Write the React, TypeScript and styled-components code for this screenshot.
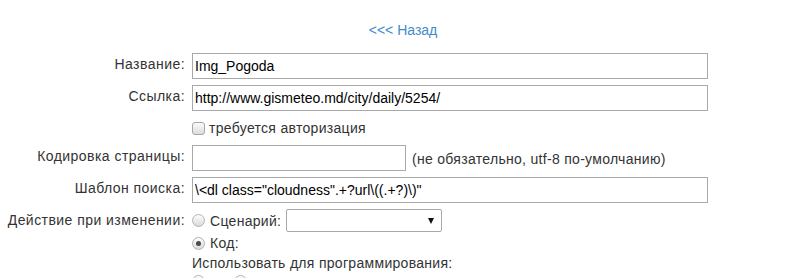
import styled, { createGlobalStyle } from "styled-components";

const GlobalStyle = createGlobalStyle`
  body {
    margin: 0;
    background: #fff;
    font-family: "Liberation Sans", Arial, sans-serif;
    font-size: 14px;
    color: #333;
  }
`;

const Page = styled.div`
  width: 806px;
  height: 278px;
  overflow: hidden;
`;

const BackBar = styled.div`
  padding-top: 22px;
  margin-bottom: 15px;
  line-height: 16px;
  text-align: center;
`;

const BackLink = styled.a`
  color: #428bca;
  text-decoration: none;
  cursor: pointer;
`;

const Row = styled.div<{ $space?: number; $top?: number }>`
  display: grid;
  grid-template-columns: 185px auto;
  column-gap: 7px;
  padding-top: ${(p) => p.$top ?? 0}px;
  margin-bottom: ${(p) => p.$space ?? 6}px;
`;

const Label = styled.div`
  text-align: right;
  padding-top: 3px;
  line-height: 16px;
  letter-spacing: 0.45px;
  white-space: nowrap;
`;

const Field = styled.div`
  display: flex;
  align-items: center;
  line-height: 16px;
  letter-spacing: 0.3px;
  white-space: nowrap;
`;

const TextInput = styled.input<{ $width: number }>`
  box-sizing: border-box;
  width: ${(p) => p.$width}px;
  height: 26px;
  margin: 0;
  padding: 0 2px;
  border: 1px solid #a9a9a9;
  font-family: "Liberation Sans", Arial, sans-serif;
  font-size: 14px;
  letter-spacing: 0;
  color: #000;
  background: #fff;
  outline: none;
`;

const Hint = styled.span`
  margin-left: 6px;
  padding-top: 2px;
`;

const Check = styled.span`
  box-sizing: border-box;
  display: inline-block;
  width: 13px;
  height: 13px;
  margin-right: 4px;
  border: 1px solid #a6a6a6;
  border-radius: 3px;
  background: linear-gradient(#fbfbfb, #dcdcdc);
`;

const Radio = styled.span<{ $checked?: boolean; $after?: number }>`
  box-sizing: border-box;
  position: relative;
  display: inline-block;
  flex: none;
  width: 13px;
  height: 13px;
  margin-right: ${(p) => p.$after ?? 5}px;
  border: 1px solid #b3b3b3;
  border-radius: 50%;
  background: linear-gradient(#fdfdfd, #dadada);

  &::after {
    content: "";
    display: ${(p) => (p.$checked ? "block" : "none")};
    position: absolute;
    left: 3px;
    top: 3px;
    width: 5px;
    height: 5px;
    border-radius: 50%;
    background: #4a4a4a;
  }
`;

const OptionText = styled.span<{ $after?: number }>`
  margin-right: ${(p) => p.$after ?? 0}px;
`;

const Select = styled.div`
  box-sizing: border-box;
  display: flex;
  align-items: center;
  justify-content: flex-end;
  width: 156px;
  height: 23px;
  padding-right: 7px;
  border: 1px solid #a9a9a9;
  border-radius: 2px;
  background: #fff;
`;

const Arrow = styled.span`
  width: 0;
  height: 0;
  margin-top: 1px;
  border-left: 3.5px solid transparent;
  border-right: 3.5px solid transparent;
  border-top: 6px solid #111;
`;

export default function App() {
  return (
    <>
      <GlobalStyle />
      <Page>
        <BackBar>
          <BackLink>&lt;&lt;&lt; Назад</BackLink>
        </BackBar>

        <Row>
          <Label>Название:</Label>
          <Field>
            <TextInput $width={516} defaultValue="Img_Pogoda" />
          </Field>
        </Row>

        <Row>
          <Label>Ссылка:</Label>
          <Field>
            <TextInput
              $width={516}
              defaultValue="http://www.gismeteo.md/city/daily/5254/"
            />
          </Field>
        </Row>

        <Row $top={3} $space={9}>
          <Label />
          <Field>
            <Check />
            требуется авторизация
          </Field>
        </Row>

        <Row>
          <Label>Кодировка страницы:</Label>
          <Field>
            <TextInput $width={214} defaultValue="" />
            <Hint>(не обязательно, utf-8 по-умолчанию)</Hint>
          </Field>
        </Row>

        <Row>
          <Label>Шаблон поиска:</Label>
          <Field>
            <TextInput
              $width={516}
              defaultValue={'\\<dl class="cloudness".+?url\\((.+?)\\)"'}
            />
          </Field>
        </Row>

        <Row $space={3}>
          <Label>Действие при изменении:</Label>
          <Field>
            <Radio />
            <OptionText $after={5}>Сценарий:</OptionText>
            <Select>
              <Arrow />
            </Select>
          </Field>
        </Row>

        <Row $space={4}>
          <Label />
          <Field>
            <Radio $checked />
            <OptionText>Код:</OptionText>
          </Field>
        </Row>

        <Row $space={4}>
          <Label />
          <Field>Использовать для программирования:</Field>
        </Row>

        <Row>
          <Label />
          <Field>
            <Radio $checked $after={29} />
            <Radio />
          </Field>
        </Row>
      </Page>
    </>
  );
}
